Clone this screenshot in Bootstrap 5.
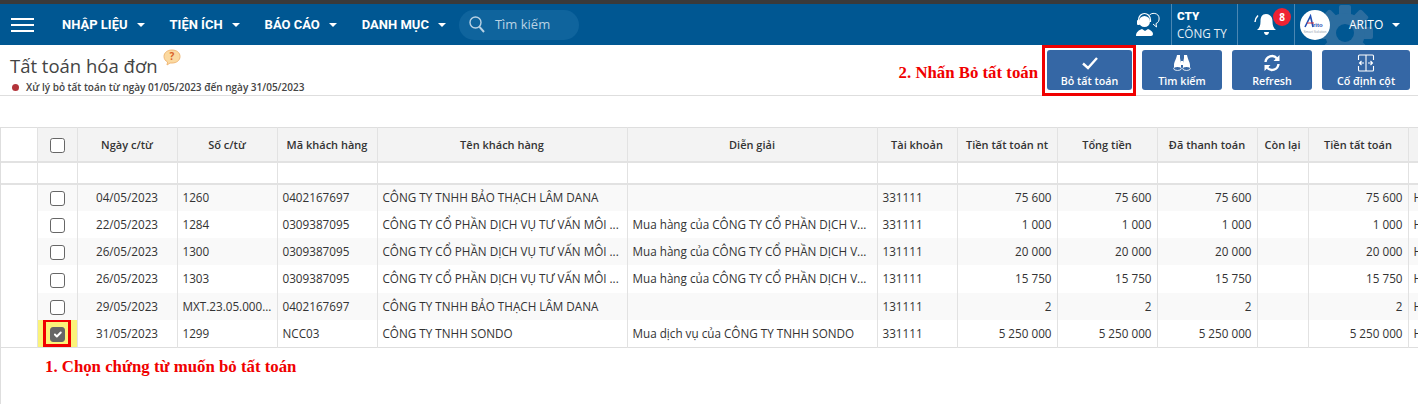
<!DOCTYPE html>
<html lang="vi">
<head>
    <meta charset="UTF-8">
    <title>Tất toán hóa đơn</title>
    <link href="https://cdn.jsdelivr.net/npm/bootstrap@5.3.3/dist/css/bootstrap.min.css" rel="stylesheet">
    <script src="https://cdn.jsdelivr.net/npm/bootstrap@5.3.3/dist/js/bootstrap.bundle.min.js"></script>

    <style>
        html, body {
            height: 100%;
            overflow: hidden;
        }

        body {
            font-family: "Open Sans", "Noto Sans", sans-serif;
            font-size: 11.7px;
            color: #333;
            background: #fff;
        }

        .app-bar {
            height: 45px;
            padding: 0;
            background: #005792;
            border-top: 4px solid #3a3a3a;
            flex-wrap: nowrap;
        }

        .burger {
            width: 23px;
            margin: 0 28px 0 11px;
        }

        .burger span {
            height: 2px;
            background: #fff;
        }

        .app-bar .nav-link {
            color: #fff;
            font-family: "Roboto", sans-serif;
            font-size: 13px;
            font-weight: 700;
            padding: 0;
            white-space: nowrap;
        }

        .app-bar .dropdown-toggle::after {
            margin-left: 9px;
            vertical-align: 2px;
            border-top-width: 4px;
            border-left-width: 4px;
            border-right-width: 4px;
        }

        .menu-links {
            gap: 25px;
        }

        .search-pill {
            width: 120px;
            height: 30px;
            margin-left: 13px;
            padding-left: 10px;
            gap: 10px;
            color: #b9d2e4;
            font-size: 13px;
            background: #0f649d;
            border-radius: 15px;
        }

        .bar-cell {
            height: 41px;
            border-left: 1px solid #4b87b3;
        }

        .support-cell {
            width: 36px;
        }

        .company-cell {
            width: 66px;
            padding-left: 5px;
            color: #e6eef5;
            line-height: 17px;
        }

        .company-cell b {
            color: #fff;
            font-family: "Roboto", sans-serif;
            font-weight: 900;
        }

        .bell-cell {
            width: 57px;
            padding-left: 16px;
        }

        .bell-count {
            top: 4px;
            left: 35px;
            width: 18px;
            height: 18px;
            color: #fff;
            font-size: 10px;
            font-weight: 700;
            line-height: 18px;
            text-align: center;
            background: #ef2233;
            border-radius: 50%;
        }

        .user-cell {
            width: 124px;
            padding-left: 5px;
            overflow: hidden;
        }

        .user-logo {
            width: 30px;
            height: 30px;
            background: #fff;
            border-radius: 50%;
        }

        .user-gear {
            top: 1px;
            left: 22px;
            width: 56px;
            height: 56px;
        }

        .user-cell .nav-link {
            margin-left: 19px;
            font-family: "Open Sans", sans-serif;
            font-size: 12px;
            font-weight: 400;
        }

        .page-head {
            height: 51px;
            border-bottom: 1px solid #dedede;
        }

        .page-title {
            margin: 9px 0 0 10px;
            color: #444;
            font-size: 18.5px;
            line-height: 24px;
            font-weight: 400;
        }

        .help-bubble {
            margin: -8px 0 0 5px;
        }

        .page-sub {
            margin: 3px 0 0 12px;
            gap: 7px;
            color: #444;
            font-size: 10px;
            font-weight: 600;
            line-height: 13px;
        }

        .dot {
            width: 7px;
            height: 7px;
            background: #b3343a;
            border-radius: 50%;
        }

        .note-red {
            color: #f00000;
            font-family: "Liberation Serif", serif;
            font-size: 16.8px;
            font-weight: 700;
        }

        .page-actions {
            gap: 10px;
            padding-right: 8px;
        }

        .page-actions .note-red {
            margin: 5px -6px 0 0;
        }

        .action-frame {
            height: 51px;
            margin: 0 -4px -1px 0;
            padding: 2px 1px 2px 2px;
            border: 3px solid #f00000;
        }

        .action-btn {
            width: 80px;
            height: 40px;
            margin: 0;
            padding: 4px 0 0;
            color: #fff;
            font-size: 10.7px;
            font-weight: 600;
            line-height: 14px;
            background: #3567a5;
            border: 0;
            border-radius: 3px;
            white-space: nowrap;
        }

        .action-frame .action-btn {
            width: 85px;
        }

        .action-btn.wide {
            width: 88px;
        }

        .action-btn svg {
            height: 18px;
            margin-bottom: 2px;
        }

        .grid-wrap {
            margin-top: 31px;
            overflow: hidden;
            border-left: 1px solid #dedede;
        }

        .grid-table {
            width: 1440px;
            margin: 0;
            table-layout: fixed;
            border-top: 1px solid #dedede;
            border-bottom: 1px solid #dedede;
        }

        .grid-table > :not(caption) > * > * {
            padding: 0 5px;
            color: #333;
            background: transparent;
            border-width: 0 1px 0 0;
            border-color: #e2e2e2;
            box-shadow: none;
            font-size: 11.7px;
            white-space: nowrap;
            overflow: hidden;
            vertical-align: middle;
        }

        .grid-table thead th {
            height: 34px;
            padding-top: 2px;
            font-size: 11px;
            font-weight: 600;
            text-align: center;
            background: #f3f3f3;
            border-bottom: 2px solid #e2e2e2;
        }

        .grid-table thead .filter-row td {
            height: 22px;
            background: #fff;
            border-bottom: 2px solid #e2e2e2;
        }

        .grid-table tbody td {
            height: 27.3px;
        }

        .grid-table tbody tr:nth-child(odd) td:not(.side-col) {
            background: #f9f9f9;
        }

        .grid-table > :not(caption) > * > .side-col {
            background: #fff;
            padding: 0;
        }

        .grid-table > :not(caption) > * > .check-col {
            padding: 0;
            text-align: center;
        }

        .grid-table tbody tr > .picked {
            position: relative;
            background: #fbf37a;
        }

        .picked-frame {
            top: -1px;
            left: 5px;
            right: 6px;
            bottom: 0;
            border: 3px solid #f00000;
        }

        .grid-check {
            width: 15px;
            height: 15px;
            margin: 0;
            vertical-align: middle;
            background-color: #fff;
            border: 1px solid #666;
            border-radius: 2px;
        }

        .grid-check:checked {
            background-color: #666;
            border-color: #666;
        }

        .note-below {
            margin: 6px 0 0 44px;
        }
    </style>
</head>
<body class="d-flex flex-column">

<nav class="navbar app-bar">
    <div class="burger d-flex flex-column gap-1">
        <span></span>
        <span></span>
        <span></span>
    </div>
    <ul class="navbar-nav flex-row menu-links">
        <li class="nav-item dropdown"><a class="nav-link dropdown-toggle" href="#">NHẬP LIỆU</a></li>
        <li class="nav-item dropdown"><a class="nav-link dropdown-toggle" href="#">TIỆN ÍCH</a></li>
        <li class="nav-item dropdown"><a class="nav-link dropdown-toggle" href="#">BÁO CÁO</a></li>
        <li class="nav-item dropdown"><a class="nav-link dropdown-toggle" href="#">DANH MỤC</a></li>
    </ul>
    <div class="search-pill d-flex align-items-center">
        <svg width="16" height="17" viewBox="0 0 16 17" fill="none" stroke="#b9d2e4" stroke-width="1.4">
            <circle cx="6.5" cy="6.5" r="5.5"/>
            <path d="M10.5 10.8 15 16" stroke-width="2"/>
        </svg>
        <span>Tìm kiếm</span>
    </div>

    <div class="d-flex align-items-center ms-auto">
        <div class="support-cell d-flex align-items-center">
            <svg width="25" height="25" viewBox="0 0 25 25" fill="#fff">
                <path d="M1 24c0-4 3-6 6-7l3 2 3-2c3 1 5 3 5 5 0 1-1 2-2 2z"/>
                <circle cx="9.500" cy="9.500" r="5.500"/>
                <path d="M3.500 10V8c0-4 3-6.500 6-6.500s6 2.500 6 6.500v2" fill="none" stroke="#fff" stroke-width="1.200"/>
                <rect x="2" y="8" width="3" height="5" rx="1"/>
                <path d="M14.500 3c2-2 5-2 7-1 2 1 3 3 2.500 6-.5 2-1.500 3-3 3.500l.5 3.500-3.500-3" fill="none" stroke="#fff" stroke-width="1"/>
            </svg>
        </div>
        <div class="bar-cell company-cell d-flex flex-column justify-content-center">
            <b>CTY</b>
            <span>CÔNG TY</span>
        </div>
        <div class="bar-cell bell-cell position-relative d-flex align-items-center">
            <svg width="23" height="24" viewBox="0 0 23 24" fill="#fff">
                <path d="M12 1c4 0 6.500 3 6.500 7.500 0 4 1 6.500 3.500 8.500H3c2.500-2 3.500-4.500 3.500-8.500C6.500 4 8 1 12 1z"/>
                <path d="M10 19h5c0 1.500-1 3-2.500 3S10 20.500 10 19z"/>
                <path d="M4 2.500C2 4.500 1 6.500 1 9" fill="none" stroke="#fff" stroke-width="1.500"/>
            </svg>
            <span class="bell-count position-absolute">8</span>
        </div>
        <div class="bar-cell user-cell position-relative d-flex align-items-center">
            <svg class="user-gear position-absolute" viewBox="-28 -28 56 56" fill="#2c6d9f">
                <rect x="-6" y="-28" width="12" height="56" rx="2"/>
                <rect x="-6" y="-28" width="12" height="56" rx="2" transform="rotate(45)"/>
                <rect x="-6" y="-28" width="12" height="56" rx="2" transform="rotate(90)"/>
                <rect x="-6" y="-28" width="12" height="56" rx="2" transform="rotate(135)"/>
                <circle r="20"/>
                <circle r="9" fill="#005792"/>
            </svg>
            <div class="user-logo position-relative d-flex align-items-center justify-content-center">
                <svg width="28" height="22" viewBox="0 0 28 22">
                    <path d="M4 13 9.500 2 12 13" fill="none" stroke="#1f4fb5" stroke-width="1.600"/>
                    <path d="M6 9h7" stroke="#d8343a" stroke-width="1"/>
                    <text x="12" y="13" fill="#1f4fb5" font-family="Liberation Sans, sans-serif" font-size="6" font-weight="700">rito</text>
                    <text x="14" y="19" fill="#9aa6b4" font-family="Liberation Sans, sans-serif" font-size="3.500" text-anchor="middle">Smart Solution</text>
                </svg>
            </div>
            <a class="nav-link dropdown-toggle position-relative" href="#">ARITO</a>
        </div>
    </div>
</nav>

<div class="page-head d-flex justify-content-between">
    <div>
        <div class="d-flex align-items-center">
            <h1 class="page-title">Tất toán hóa đơn</h1>
            <svg class="help-bubble" width="18" height="17" viewBox="0 0 18 17">
                <path d="M9 1c4.500 0 8 2.500 8 6.500S13.500 14 9 14H7l-3 2 .6-3C2.500 12 1 10 1 7.500 1 3.500 4.500 1 9 1z" fill="#fbd9a0" stroke="#f0b878"/>
                <text x="9" y="11" fill="#d9602a" font-size="10" font-weight="700" text-anchor="middle">?</text>
            </svg>
        </div>
        <div class="page-sub d-flex align-items-center">
            <span class="dot"></span>
            <span>Xử lý bỏ tất toán từ ngày 01/05/2023 đến ngày 31/05/2023</span>
        </div>
    </div>
    <div class="page-actions d-flex align-items-center">
        <span class="note-red">2. Nhấn Bỏ tất toán</span>
        <div class="action-frame">
            <button type="button" class="btn action-btn d-flex flex-column align-items-center">
                <svg width="18" viewBox="0 0 18 18" fill="none" stroke="#fff" stroke-width="2.400"><path d="M2 9.500 7 14 16 4"/></svg>
                Bỏ tất toán
            </button>
        </div>
        <button type="button" class="btn action-btn d-flex flex-column align-items-center">
            <svg width="18" viewBox="0 0 18 18" fill="#fff">
                <path d="M4 1h3v3l1 5v4H1V11C1 8 3 6 4 1zM14 1h-3v3l-1 5v4h7V11c0-2.500-2-5-3-10z"/>
                <path d="M8 7h2v4H8z"/>
                <ellipse cx="4.500" cy="14.500" rx="3.800" ry="2" fill="none" stroke="#fff" stroke-width=".8"/>
                <ellipse cx="13.500" cy="14.500" rx="3.800" ry="2" fill="none" stroke="#fff" stroke-width=".8"/>
            </svg>
            Tìm kiếm
        </button>
        <button type="button" class="btn action-btn d-flex flex-column align-items-center">
            <svg width="18" viewBox="0 0 18 18" fill="none" stroke="#fff" stroke-width="2.400">
                <path d="M2.500 8A6.500 6.500 0 0 1 14 4.500M15.500 10A6.500 6.500 0 0 1 4 13.500"/>
                <path d="M16.500 1v6h-6zM1.500 17v-6h6z" fill="#fff" stroke="none"/>
            </svg>
            Refresh
        </button>
        <button type="button" class="btn action-btn wide d-flex flex-column align-items-center">
            <svg width="18" viewBox="0 0 18 18" fill="none" stroke="#fff" stroke-width="1.100">
                <path d="M1.500 6V2c0-.5.5-1 1-1h13c.5 0 1 .5 1 1v4M1.500 12v4c0 .5.5 1 1 1h13c.5 0 1-.5 1-1v-4M9 1v16"/>
                <path d="M7 9H2.500M4.500 7 2.500 9l2 2M11 9h4.500M13.500 7l2 2-2 2"/>
            </svg>
            Cố định cột
        </button>
    </div>
</div>

<div class="grid-wrap flex-grow-1">
    <table class="table grid-table">
        <colgroup>
            <col style="width: 36px">
            <col style="width: 40px">
            <col style="width: 100px">
            <col style="width: 100px">
            <col style="width: 100px">
            <col style="width: 250px">
            <col style="width: 250px">
            <col style="width: 80px">
            <col style="width: 100px">
            <col style="width: 100px">
            <col style="width: 100px">
            <col style="width: 51px">
            <col style="width: 100px">
            <col style="width: 132px">
        </colgroup>
        <thead>
            <tr>
                <th class="side-col"></th>
                <th class="check-col"><input class="form-check-input grid-check" type="checkbox"></th>
                <th>Ngày c/từ</th>
                <th>Số c/từ</th>
                <th>Mã khách hàng</th>
                <th>Tên khách hàng</th>
                <th>Diễn giải</th>
                <th>Tài khoản</th>
                <th>Tiền tất toán nt</th>
                <th>Tổng tiền</th>
                <th>Đã thanh toán</th>
                <th>Còn lại</th>
                <th>Tiền tất toán</th>
                <th></th>
            </tr>
            <tr class="filter-row">
                <td class="side-col"></td>
                <td></td><td></td><td></td><td></td><td></td><td></td><td></td><td></td><td></td><td></td><td></td><td></td><td></td>
            </tr>
        </thead>
        <tbody>
            <tr>
                <td class="side-col"></td>
                <td class="check-col"><input class="form-check-input grid-check" type="checkbox"></td>
                <td class="text-center">04/05/2023</td>
                <td>1260</td>
                <td>0402167697</td>
                <td>CÔNG TY TNHH BẢO THẠCH LÂM DANA</td>
                <td></td>
                <td>331111</td>
                <td class="text-end">75 600</td>
                <td class="text-end">75 600</td>
                <td class="text-end">75 600</td>
                <td></td>
                <td class="text-end">75 600</td>
                <td>H</td>
            </tr>
            <tr>
                <td class="side-col"></td>
                <td class="check-col"><input class="form-check-input grid-check" type="checkbox"></td>
                <td class="text-center">22/05/2023</td>
                <td>1284</td>
                <td>0309387095</td>
                <td>CÔNG TY CỔ PHẦN DỊCH VỤ TƯ VẤN MÔI ...</td>
                <td>Mua hàng của CÔNG TY CỔ PHẦN DỊCH V...</td>
                <td>331111</td>
                <td class="text-end">1 000</td>
                <td class="text-end">1 000</td>
                <td class="text-end">1 000</td>
                <td></td>
                <td class="text-end">1 000</td>
                <td>H</td>
            </tr>
            <tr>
                <td class="side-col"></td>
                <td class="check-col"><input class="form-check-input grid-check" type="checkbox"></td>
                <td class="text-center">26/05/2023</td>
                <td>1300</td>
                <td>0309387095</td>
                <td>CÔNG TY CỔ PHẦN DỊCH VỤ TƯ VẤN MÔI ...</td>
                <td>Mua hàng của CÔNG TY CỔ PHẦN DỊCH V...</td>
                <td>131111</td>
                <td class="text-end">20 000</td>
                <td class="text-end">20 000</td>
                <td class="text-end">20 000</td>
                <td></td>
                <td class="text-end">20 000</td>
                <td>H</td>
            </tr>
            <tr>
                <td class="side-col"></td>
                <td class="check-col"><input class="form-check-input grid-check" type="checkbox"></td>
                <td class="text-center">26/05/2023</td>
                <td>1303</td>
                <td>0309387095</td>
                <td>CÔNG TY CỔ PHẦN DỊCH VỤ TƯ VẤN MÔI ...</td>
                <td>Mua hàng của CÔNG TY CỔ PHẦN DỊCH V...</td>
                <td>131111</td>
                <td class="text-end">15 750</td>
                <td class="text-end">15 750</td>
                <td class="text-end">15 750</td>
                <td></td>
                <td class="text-end">15 750</td>
                <td>H</td>
            </tr>
            <tr>
                <td class="side-col"></td>
                <td class="check-col"><input class="form-check-input grid-check" type="checkbox"></td>
                <td class="text-center">29/05/2023</td>
                <td>MXT.23.05.000...</td>
                <td>0402167697</td>
                <td>CÔNG TY TNHH BẢO THẠCH LÂM DANA</td>
                <td></td>
                <td>131111</td>
                <td class="text-end">2</td>
                <td class="text-end">2</td>
                <td class="text-end">2</td>
                <td></td>
                <td class="text-end">2</td>
                <td>H</td>
            </tr>
            <tr>
                <td class="side-col"></td>
                <td class="check-col picked">
                    <span class="picked-frame position-absolute"></span>
                    <input class="form-check-input grid-check" type="checkbox" checked>
                </td>
                <td class="text-center">31/05/2023</td>
                <td>1299</td>
                <td>NCC03</td>
                <td>CÔNG TY TNHH SONDO</td>
                <td>Mua dịch vụ của CÔNG TY TNHH SONDO</td>
                <td>331111</td>
                <td class="text-end">5 250 000</td>
                <td class="text-end">5 250 000</td>
                <td class="text-end">5 250 000</td>
                <td></td>
                <td class="text-end">5 250 000</td>
                <td>H</td>
            </tr>
        </tbody>
    </table>
    <div class="note-red note-below">1. Chọn chứng từ muốn bỏ tất toán</div>
</div>

</body>
</html>
